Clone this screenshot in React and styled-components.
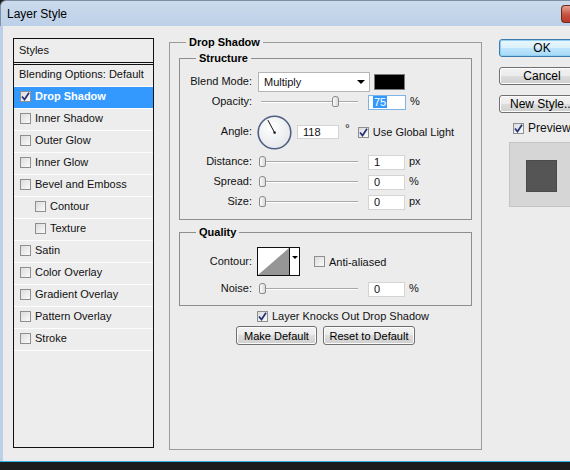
import React from 'react'
import styled, { createGlobalStyle } from 'styled-components'

const GlobalStyle = createGlobalStyle`
  html, body {
    margin: 0;
    padding: 0;
    background: #1c1c1c;
  }
  body {
    font-family: "Liberation Sans", Arial, sans-serif;
    font-size: 11px;
    color: #111;
  }
`

const effects = [
  { name: 'Drop Shadow', checked: true, selected: true },
  { name: 'Inner Shadow' },
  { name: 'Outer Glow' },
  { name: 'Inner Glow' },
  { name: 'Bevel and Emboss' },
  { name: 'Contour', indent: true },
  { name: 'Texture', indent: true },
  { name: 'Satin' },
  { name: 'Color Overlay' },
  { name: 'Gradient Overlay' },
  { name: 'Pattern Overlay' },
  { name: 'Stroke' },
]

const CheckBox = ({ checked }) => (
  <Box>
    {checked && (
      <svg width="9" height="9" viewBox="0 0 9 9">
        <path d="M1 4.5 L3.5 7.5 L8 0.8" fill="none" stroke="#23307a" strokeWidth="1.7" />
      </svg>
    )}
  </Box>
)

const Slider = ({ value }) => (
  <Track>
    <Thumb style={{ left: `${1 + value * 0.97}px` }} />
  </Track>
)

const Dial = ({ angle }) => {
  const r = (angle * Math.PI) / 180
  const x = 17.5 + Math.cos(r) * 14
  const y = 17.5 - Math.sin(r) * 14
  return (
    <DialBox width="35" height="35" viewBox="0 0 35 35">
      <defs>
        <radialGradient id="dialFill" cx="40%" cy="35%" r="70%">
          <stop offset="0" stopColor="#ffffff" />
          <stop offset="1" stopColor="#e4e6ea" />
        </radialGradient>
      </defs>
      <circle cx="17.5" cy="17.5" r="16.3" fill="url(#dialFill)" stroke="#4f5f82" strokeWidth="1.6" />
      <line x1="17.5" y1="17.5" x2={x} y2={y} stroke="#111" strokeWidth="1" />
      <rect x="16.5" y="16.5" width="2.2" height="2.2" fill="#111" />
    </DialBox>
  )
}

export default function App() {
  return (
    <>
      <GlobalStyle />
      <Window>
        <TitleBar>
          <Title>Layer Style</Title>
          <Close />
        </TitleBar>
        <Body>
          <StylesPanel>
            <PanelHeader>Styles</PanelHeader>
            <StyleRow>Blending Options: Default</StyleRow>
            {effects.map((e) => (
              <StyleRow key={e.name} $selected={e.selected} $indent={e.indent}>
                <CheckBox checked={e.checked} />
                <span>{e.name}</span>
              </StyleRow>
            ))}
          </StylesPanel>

          <Group $outer>
            <Legend $outer>Drop Shadow</Legend>
            <Group>
              <Legend>Structure</Legend>
              <Row $h={20}>
                <Label>Blend Mode:</Label>
                <Select>
                  <span>Multiply</span>
                  <Caret />
                </Select>
                <Swatch />
              </Row>
              <Row $h={20}>
                <Label>Opacity:</Label>
                <Slider value={75} />
                <Field $focused $w={38}>
                  <Selected>75</Selected>
                </Field>
                <Unit>%</Unit>
              </Row>
              <Row $h={40}>
                <Label>Angle:</Label>
                <Dial angle={118} />
                <Field $w={42} $ml={5} $h={14}>118</Field>
                <Degree>°</Degree>
                <CheckLabel $ml={7}>
                  <CheckBox checked />
                  Use Global Light
                </CheckLabel>
              </Row>
              <Row $h={20}>
                <Label>Distance:</Label>
                <Slider value={0} />
                <Field $w={37}>1</Field>
                <Unit>px</Unit>
              </Row>
              <Row $h={20}>
                <Label>Spread:</Label>
                <Slider value={0} />
                <Field $w={37}>0</Field>
                <Unit>%</Unit>
              </Row>
              <Row $h={20}>
                <Label>Size:</Label>
                <Slider value={0} />
                <Field $w={37}>0</Field>
                <Unit>px</Unit>
              </Row>
            </Group>

            <Group $quality>
              <Legend>Quality</Legend>
              <Row $h={29}>
                <Label>Contour:</Label>
                <ContourPicker>
                  <svg width="31" height="27" viewBox="0 0 31 27">
                    <rect width="31" height="27" fill="#fff" />
                    <polygon points="0,27 31,0 31,27" fill="#969696" />
                  </svg>
                  <ContourArrow>
                    <Caret $small />
                  </ContourArrow>
                </ContourPicker>
                <CheckLabel $ml={13}>
                  <CheckBox />
                  Anti-aliased
                </CheckLabel>
              </Row>
              <Row $h={16} $mt={5}>
                <Label>Noise:</Label>
                <Slider value={0} />
                <Field $w={37}>0</Field>
                <Unit>%</Unit>
              </Row>
            </Group>

            <KnockRow>
              <CheckLabel>
                <CheckBox checked />
                Layer Knocks Out Drop Shadow
              </CheckLabel>
            </KnockRow>
            <ButtonRow>
              <Button $w={81}>Make Default</Button>
              <Button $w={92}>Reset to Default</Button>
            </ButtonRow>
          </Group>

          <SideColumn>
            <Button $w={86} $h={18} $default>OK</Button>
            <Button $w={86} $h={18}>Cancel</Button>
            <Button $w={86} $h={18}>New Style...</Button>
            <PreviewToggle>
              <CheckBox checked />
              Preview
            </PreviewToggle>
            <PreviewBox>
              <PreviewSquare />
            </PreviewBox>
          </SideColumn>
        </Body>
        <BottomEdge />
      </Window>
    </>
  )
}

const Window = styled.div`
  width: 570px;
  height: 470px;
  overflow: hidden;
  display: flex;
  flex-direction: column;
  background: #1c1c1c;
`

const TitleBar = styled.div`
  height: 26px;
  flex-shrink: 0;
  display: flex;
  align-items: flex-start;
  justify-content: space-between;
  background: linear-gradient(#cbdbec, #bcd0e8);
  border-top: 1px solid #7f8fa3;
  border-left: 1px solid #7f8fa3;
  border-top-left-radius: 6px;
  box-sizing: border-box;
`

const Title = styled.div`
  font-size: 12px;
  color: #000;
  margin: 6px 0 0 6px;
`

const Close = styled.div`
  width: 8px;
  height: 16px;
  margin-top: 4px;
  border: 1px solid #6d2a22;
  border-right: none;
  border-radius: 4px 0 0 4px;
  background: linear-gradient(#e8a392, #c4533e 55%, #b83a26);
`

const Body = styled.div`
  height: 435px;
  flex-shrink: 0;
  display: flex;
  align-items: flex-start;
  box-sizing: border-box;
  padding: 9px 0 0 10px;
  background: #ececec;
  border-left: 3px solid #bccfe6;
  overflow: hidden;
`

const BottomEdge = styled.div`
  height: 1px;
  background: #34b3e6;
`

const StylesPanel = styled.div`
  width: 141px;
  height: 410px;
  margin-top: 3px;
  flex-shrink: 0;
  box-sizing: border-box;
  border: 1px solid #111;
  background: #ededed;
`

const PanelHeader = styled.div`
  height: 26px;
  box-sizing: border-box;
  padding: 0 0 2px 5px;
  display: flex;
  align-items: center;
  border-bottom: 3px double #111;
`

const StyleRow = styled.div`
  height: 22px;
  box-sizing: border-box;
  border-bottom: 1px solid #fdfdfd;
  display: flex;
  align-items: center;
  gap: 4px;
  padding: 0 0 3px ${(p) => (p.$indent ? 20 : 5)}px;
  background: ${(p) => (p.$selected ? '#3399ff' : 'transparent')};
  color: ${(p) => (p.$selected ? '#fff' : '#111')};
  font-weight: ${(p) => (p.$selected ? 700 : 400)};
  white-space: nowrap;
`

const Box = styled.span`
  width: 11px;
  height: 11px;
  flex-shrink: 0;
  box-sizing: border-box;
  border: 1px solid #8e8f8f;
  background: linear-gradient(135deg, #dcdcdc, #fafafa);
  display: inline-flex;
  align-items: center;
  justify-content: center;
  margin-left: 1px;
`

const Group = styled.fieldset`
  margin: ${(p) => (p.$outer ? '0 0 0 15px' : p.$quality ? '5px 0 0' : '0')};
  padding: ${(p) => (p.$outer ? '2px 9px 0' : p.$quality ? '8px 0 8px' : '7px 0 7px')};
  border: 1px solid ${(p) => (p.$outer ? '#9a9a9a' : '#8e8e8e')};
  box-sizing: border-box;
  min-width: 0;
  flex-shrink: 0;
  ${(p) => p.$outer && 'width: 313px; height: 415px;'}
`

const Legend = styled.legend`
  font-weight: 700;
  font-size: 11px;
  line-height: 14px;
  padding: 0 3px;
  margin-left: ${(p) => (p.$outer ? 7 : 16)}px;
  color: #000;
`

const Row = styled.div`
  height: ${(p) => p.$h}px;
  margin-top: ${(p) => p.$mt || 0}px;
  display: flex;
  align-items: center;
`

const Label = styled.div`
  width: 72px;
  margin-right: 6px;
  margin-top: -2px;
  text-align: right;
  flex-shrink: 0;
  white-space: nowrap;
`

const Select = styled.div`
  width: 112px;
  height: 20px;
  box-sizing: border-box;
  border: 1px solid #b5b5b5;
  background: #fff;
  display: flex;
  align-items: center;
  justify-content: space-between;
  padding: 0 4px 0 5px;
`

const Caret = styled.span`
  width: 0;
  height: 0;
  border-left: ${(p) => (p.$small ? 3 : 4)}px solid transparent;
  border-right: ${(p) => (p.$small ? 3 : 4)}px solid transparent;
  border-top: ${(p) => (p.$small ? 3 : 4)}px solid #000;
`

const Swatch = styled.div`
  width: 31px;
  height: 16px;
  margin-left: 4px;
  box-sizing: border-box;
  border: 1px solid #7a7a7a;
  background: #000;
`

const Track = styled.div`
  position: relative;
  width: 102px;
  height: 12px;
  flex-shrink: 0;

  &::before {
    content: '';
    position: absolute;
    left: 3px;
    right: 2px;
    top: 5px;
    height: 1px;
    background: #a9a9a9;
    box-shadow: 0 1px 0 #fff;
  }
`

const Thumb = styled.span`
  position: absolute;
  top: 0;
  width: 7px;
  height: 11px;
  box-sizing: border-box;
  border: 1px solid #8a8a8a;
  border-radius: 3px 3px 2px 2px;
  background: linear-gradient(90deg, #fdfdfd, #d8d8d8);
`

const Field = styled.div`
  width: ${(p) => p.$w}px;
  height: ${(p) => p.$h || 15}px;
  margin-left: ${(p) => (p.$ml !== undefined ? p.$ml : 8)}px;
  box-sizing: border-box;
  flex-shrink: 0;
  border: 1px solid ${(p) => (p.$focused ? '#7fb3e4' : '#d4d4d4')};
  background: #fff;
  display: flex;
  align-items: center;
  padding-left: 5px;
  font-size: 11px;
`

const Selected = styled.span`
  background: #3399ff;
  color: #fff;
  line-height: 12px;
  padding: 0 1px;
  margin-left: -1px;
`

const Unit = styled.span`
  margin: -2px 0 0 4px;
`

const Degree = styled.span`
  margin-left: 6px;
  align-self: flex-start;
  margin-top: 10px;
  font-size: 12px;
`

const DialBox = styled.svg`
  margin-left: -1px;
  flex-shrink: 0;
`

const CheckLabel = styled.label`
  display: flex;
  align-items: center;
  gap: 4px;
  margin-left: ${(p) => p.$ml || 0}px;
  white-space: nowrap;
`

const ContourPicker = styled.div`
  margin-left: -1px;
  height: 29px;
  display: flex;
  box-sizing: border-box;
  border: 1px solid #111;
  background: #fff;
`

const ContourArrow = styled.div`
  width: 10px;
  border-left: 1px solid #111;
  display: flex;
  justify-content: center;
  padding-top: 8px;
  box-sizing: border-box;
`

const KnockRow = styled.div`
  height: 12px;
  margin-top: 4px;
  display: flex;
  justify-content: center;
  padding-left: 34px;
`

const ButtonRow = styled.div`
  margin-top: 4px;
  display: flex;
  justify-content: center;
  gap: 6px;
`

const Button = styled.div`
  width: ${(p) => p.$w}px;
  height: ${(p) => p.$h || 19}px;
  flex-shrink: 0;
  box-sizing: border-box;
  border: 1px solid ${(p) => (p.$default ? '#3d7bad' : '#707070')};
  border-radius: 3px;
  background: ${(p) =>
    p.$default
      ? 'linear-gradient(#eaf6fd, #d9f0fc 50%, #bee6fd 50%, #a7d9f5)'
      : 'linear-gradient(#f2f2f2, #ebebeb 50%, #dddddd 50%, #cfcfcf)'};
  box-shadow: inset 0 0 0 1px ${(p) => (p.$default ? '#8fd0f2' : '#fcfcfc')};
  display: flex;
  align-items: center;
  justify-content: center;
  font-size: ${(p) => (p.$h ? 12 : 11)}px;
  color: #000;
  white-space: nowrap;
`

const SideColumn = styled.div`
  margin: 4px 0 0 17px;
  display: flex;
  flex-direction: column;
  gap: 10px;
  flex-shrink: 0;
`

const PreviewToggle = styled.label`
  height: 12px;
  margin: -1px 0 0 13px;
  display: flex;
  align-items: center;
  gap: 4px;
  font-size: 12px;
`

const PreviewBox = styled.div`
  width: 75px;
  height: 65px;
  margin: -2px 0 0 10px;
  box-sizing: border-box;
  border: 1px solid #c4c4c4;
  background: #d6d6d6;
  padding: 17px 0 0 16px;
`

const PreviewSquare = styled.div`
  width: 31px;
  height: 32px;
  background: #555;
  border: 1px solid #4a4a4a;
  box-sizing: border-box;
`
